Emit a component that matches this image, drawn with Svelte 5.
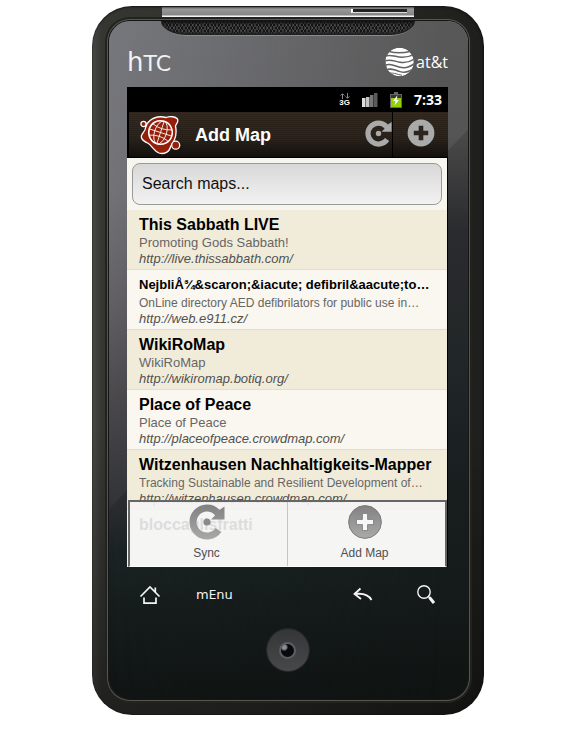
<script>
  const maps = [
    { name: 'This Sabbath LIVE', about: 'Promoting Gods Sabbath!', url: 'http://live.thissabbath.com/' },
    { name: 'NejbliÅ¾&scaron;&iacute; defibril&aacute;to…', about: 'OnLine directory AED defibrilators for public use in…', url: 'http://web.e911.cz/', smallName: true, smallAbout: true },
    { name: 'WikiRoMap', about: 'WikiRoMap', url: 'http://wikiromap.botiq.org/' },
    { name: 'Place of Peace', about: 'Place of Peace', url: 'http://placeofpeace.crowdmap.com/' },
    { name: 'Witzenhausen Nachhaltigkeits-Mapper', about: 'Tracking Sustainable and Resilient Development of…', url: 'http://witzenhausen.crowdmap.com/', smallAbout: true },
    { name: 'bloccaglisfratti', about: '', url: '' }
  ];
  let query = $state('');
</script>

{#snippet syncIcon(size, fill, hub)}
  <svg width={size} height={size} viewBox="0 0 36 36" aria-hidden="true">
    <path d="M28 8.200A14 14 0 1 0 29.500 26" fill="none" stroke={fill} stroke-width="7" />
    <path d="M35.500 2.500V15.500H22L26 11.500 25 9 31 5.500Z" fill={fill} />
    <circle cx="18" cy="18" r="3.600" fill={hub} />
  </svg>
{/snippet}

<main class="stage">
  <div class="phone">
    <div class="lip"><span class="slot"></span></div>
    <div class="grille"></div>

    <div class="glass">
      <header class="brands">
        <div class="htc"><span>h</span><small>TC</small></div>
        <div class="carrier">
          <svg width="29" height="30" viewBox="0 0 29 30" aria-hidden="true">
            <defs><clipPath id="ball"><circle cx="14.5" cy="15" r="14.3" /></clipPath></defs>
            <g clip-path="url(#ball)">
              <circle cx="14.500" cy="15" r="14.300" fill="#fff" />
              <g fill="none" stroke="#626264" stroke-width="1.500">
                <path d="M4 4.500Q14 7 25 4.500" />
                <path d="M-1 10C4 6.500 8 9.500 14 10S25 9.500 28 7.500" />
                <path d="M-1 14.500C4 11 9 14.300 15 15.300S26 14.500 30 11.500" />
                <path d="M-1 19C4 15.500 9 18.800 15 20.300S26 19.500 30 16" />
                <path d="M0 23.500C5 20 10 23.200 15 24.600S26 24 30 20.500" />
                <path d="M2 24.500 0 14M1 27C7 24.500 12 27.500 17 28.200" stroke-width="1" />
              </g>
            </g>
          </svg>
          <span>at&amp;t</span>
        </div>
      </header>

      <section class="screen">
        <div class="status">
          <div class="net">
            <svg width="10" height="6" viewBox="0 0 10 6" aria-hidden="true">
              <path d="M2.500 6V1M.6 2.600 2.500.7l1.900 1.900M7.500 0v5M5.600 3.400 7.500 5.300l1.900-1.900" fill="none" stroke="#8a8a8a" />
            </svg>
            <span>3G</span>
          </div>
          <svg width="16" height="14" viewBox="0 0 16 14" aria-hidden="true">
            <path d="M0 5h3.500v9H0z" fill="#ddd" /><path d="M4 4h3.500v10H4z" fill="#c4c4c4" />
            <path d="M8 2h3.500v12H8z" fill="#777" /><path d="M12 0h3.500v14H12z" fill="#5a5a5a" />
          </svg>
          <svg width="12" height="16" viewBox="0 0 12 16" aria-hidden="true">
            <path d="M4 0h4v2h4v14H0V2h4z" fill="#666" /><path d="M1 6h10v9H1z" fill="#8fd400" />
            <path d="M1 3h10v3H1z" fill="#333" />
            <path d="M7.500 3 3 9h2.500l-1 4.500L9 8H6.500z" fill="#fff" />
          </svg>
          <time>7:33</time>
        </div>

        <div class="bar">
          <svg width="42" height="40" viewBox="0 0 42 40" aria-hidden="true">
            <g fill="#961f0a" stroke="#fff" stroke-width="1.300">
              <path d="M11 5.500C16 1.500 22 1.200 27 2.500 31 1 36.500 1.500 38.500 4 40 7 37 8.500 36.500 11 37.500 16 37.500 20 35.500 24.500 34 28 32.500 29.500 31.500 32 30 37.500 25 39.500 20 38 15 36 13.500 31.500 9.500 28.500 5 26.500 1.500 24 2.500 20.500 4 17 6 16.500 6.500 13 7 9.500 8.500 7.500 11 5.500Z" />
              <circle cx="4.500" cy="9" r="2.600" />
              <circle cx="36.700" cy="30.200" r="4" />
            </g>
            <g fill="none" stroke="#fff" stroke-width=".8" transform="rotate(18 21.500 17.500)">
              <circle cx="21.500" cy="17.500" r="11.800" stroke-width="1.500" />
              <ellipse cx="21.500" cy="17.500" rx="6" ry="11.800" />
              <path d="M21.500 5.700v23.600M9.700 17.500h23.600M11.500 11.500q10 4 20 0M11.500 23.500q10-4 20 0" />
            </g>
          </svg>
          <h1>Add Map</h1>
          <button class="tool" aria-label="Sync">{@render syncIcon(27, '#aaa', '#aaa')}</button>
          <button class="tool add" aria-label="Add Map">
            <svg width="28" height="28" viewBox="0 0 28 28" aria-hidden="true">
              <circle cx="14" cy="14" r="13.400" fill="#aaa" />
              <path d="M11.700 6.800h4.600v4.900h4.900v4.600h-4.900v4.900h-4.600v-4.900H6.800v-4.600h4.900z" fill="#2c251d" />
            </svg>
          </button>
        </div>

        <div class="content">
          <div class="search">
            <input type="search" aria-label="Search maps" placeholder="Search maps..." bind:value={query} />
          </div>
          <ul>
            {#each maps as map}
              <li>
                <h2 class:small={map.smallName}>{map.name}</h2>
                <p class:small={map.smallAbout}>{map.about}</p>
                {#if map.url}<a href={map.url}>{map.url}</a>{/if}
              </li>
            {/each}
          </ul>
          <div class="menu">
            <button>{@render syncIcon(38, 'url(#metal)', '#8a8a8a')}<span>Sync</span></button>
            <button>
              <svg width="38" height="38" viewBox="0 0 38 38" aria-hidden="true">
                <defs>
                  <linearGradient id="metal" gradientUnits="userSpaceOnUse" x1="0" y1="0" x2="0" y2="38">
                    <stop offset="0" stop-color="#808080" /><stop offset="1" stop-color="#acacac" />
                  </linearGradient>
                </defs>
                <circle cx="19" cy="19" r="17.300" fill="url(#metal)" stroke="#787878" />
                <path d="M16.300 10h5.400v6.300H28v5.400h-6.300V28h-5.400v-6.300H10v-5.400h6.300z" fill="#f7f7f7" stroke="#777" stroke-width=".8" />
              </svg>
              <span>Add Map</span>
            </button>
          </div>
        </div>
      </section>

      <nav class="keys">
        <button aria-label="Home">
          <svg width="22" height="20" viewBox="0 0 22 20" fill="none" stroke="#f4f4f4" stroke-width="1.700" aria-hidden="true">
            <path d="M1.500 11.500 11 2l9.500 9.500M16.300 7V2.500M5 12.500v5.700h12v-5.700" />
          </svg>
        </button>
        <button class="word">m<small>E</small>nu</button>
        <span class="gap"></span>
        <button aria-label="Back">
          <svg width="20" height="16" viewBox="0 0 20 16" fill="none" stroke="#f4f4f4" stroke-width="1.800" aria-hidden="true">
            <path d="M7.500 1.500 1.500 7 8 12M2 7C10 6 15.500 7.500 18.500 13" />
          </svg>
        </button>
        <button aria-label="Search">
          <svg width="20" height="20" viewBox="0 0 20 20" fill="none" stroke="#f4f4f4" aria-hidden="true">
            <circle cx="8" cy="7" r="6.200" stroke-width="1.400" /><path d="m12 11 2 2" stroke-width="1.500" />
            <path d="m13.500 12.500 4.500 5.500" stroke-width="3" />
          </svg>
        </button>
      </nav>
      <button class="stick" aria-label="Trackpad"><span></span></button>
    </div>
  </div>
</main>

<style>
  :global(body) { background: #fff; }
  * { box-sizing: border-box; }
  button { border: 0; padding: 0; background: none; color: inherit; font: inherit; cursor: pointer; }
  svg { display: block; }
  .stage {
    display: flex;
    justify-content: center;
    padding: 6px 16px 19px;
    font-family: 'Liberation Sans', Arial, sans-serif;
  }
  .phone {
    position: relative;
    width: 100%;
    max-width: 392px;
    padding: 15px 16px 16px 17px;
    border-radius: 40px;
    background:
      linear-gradient(to bottom, transparent 60%, rgba(0, 0, 0, .4)),
      linear-gradient(to right, #484944, #353632 10px, #30312d 40%, #1e1e1c);
    box-shadow: inset 0 1px 2px #181817, inset -1px 0 2px #111;
  }
  .lip {
    position: absolute;
    top: 1px;
    left: 70px;
    right: 70px;
    height: 14px;
    background: linear-gradient(to bottom, #4d4d4b, #999 2px, #858585 8px, #f5f5f5 9px, #eee 12px, #333);
  }
  .slot {
    position: absolute;
    top: 2px;
    right: 7px;
    width: 56px;
    height: 4px;
    border-left: 2px solid #fff;
    border-bottom: 1px solid #ddd;
    background: #222;
  }
  .grille {
    position: absolute;
    z-index: 1;
    top: 15px;
    left: 69px;
    right: 69px;
    height: 15px;
    border-bottom: 1px solid #8a8a8a;
    border-radius: 0 0 26px 26px / 0 0 15px 15px;
    background:
      repeating-linear-gradient(60deg, transparent 0 2px, rgba(110, 110, 110, .4) 2px 3px),
      repeating-linear-gradient(120deg, #151515 0 2px, #3c3c3c 2px 3px);
    box-shadow: inset 0 2px 3px #111, inset 0 -2px 2px #222;
  }
  .glass {
    position: relative;
    padding: 0 20px 28px 18px;
    border-radius: 21px;
    background: linear-gradient(to bottom, #77787d, #737378 25%, #636165 41%, #4c4a4d 55%, #35363a 70%, #1d2526 78%, #161d1c 86%, #101514);
    box-shadow: 0 0 0 1px #151515, 0 0 0 2px #55564f, 0 0 0 4px #22231f;
  }
  .glass::before {
    content: '';
    position: absolute;
    inset: 0;
    border-radius: 21px;
    background: linear-gradient(to bottom, #585858, #555 17%, #4a4a4b 21%, #313235 31%, #232a2b 56%, #161d1c 80%, #0f1312);
    mask-image: linear-gradient(to right, transparent, #000 94%);
  }
  .glass::after {
    content: '';
    position: absolute;
    inset: 0;
    border-radius: 21px;
    background: linear-gradient(to bottom, rgba(0, 0, 0, .14) 70%, transparent 84%);
    clip-path: polygon(0 72%, 100% 16%, 100% 100%, 0 100%);
  }
  .glass > * { position: relative; z-index: 1; }
  .brands {
    display: flex;
    justify-content: space-between;
    align-items: flex-start;
    height: 66px;
    padding-top: 26px;
    color: #fff;
  }
  .htc { font: 26px/30px 'DejaVu Sans', sans-serif; color: #f2f2f2; }
  .htc small { font-size: 22px; }
  .carrier { display: flex; align-items: center; gap: 2px; font: 16px/28px 'Open Sans', sans-serif; }

  .screen { background: #000; overflow: hidden; }
  .status {
    display: flex;
    justify-content: flex-end;
    align-items: center;
    gap: 12px;
    height: 25px;
    padding-right: 6px;
    color: #fff;
  }
  .net { display: flex; flex-direction: column; align-items: center; font: bold 8px/8px 'Liberation Sans', sans-serif; }
  time { font: bold 14px/24px 'Open Sans', sans-serif; }
  .bar {
    display: flex;
    align-items: center;
    height: 46px;
    margin-left: 2px;
    padding-left: 10px;
    border-bottom: 1px solid #000;
    background:
      repeating-linear-gradient(to bottom, rgba(0, 0, 0, .12) 0 1px, transparent 1px 2px),
      linear-gradient(to bottom, #352a20, #2b231b 60%, #14100d);
    color: #fff;
  }
  h1 { flex: 1; margin: 0 0 0 14px; font-size: 18px; line-height: 24px; }
  .tool { display: flex; justify-content: flex-end; align-items: center; width: 28px; height: 45px; padding-bottom: 3px; }
  .add { justify-content: center; width: 56px; border-left: 1px solid #000; }

  .content {
    position: relative;
    height: 409px;
    margin-right: 1px;
    overflow: hidden;
    background: #f6f6ee;
  }
  .search { padding: 5px; }
  input {
    display: block;
    width: 100%;
    height: 42px;
    padding: 0 9px;
    border: 1px solid #999;
    border-radius: 8px;
    background: linear-gradient(to bottom, #d8d8d8, #f2f2f2);
    color: #000;
    font: 16px/20px 'Liberation Sans', Arial, sans-serif;
    appearance: none;
  }
  input::placeholder { color: #111; opacity: 1; }
  ul { margin: 0; padding: 0; list-style: none; }
  li {
    display: flex;
    flex-direction: column;
    height: 60px;
    padding: 5px 12px 0;
    border-bottom: 1px solid #dcdddd;
    background: #f9f7ef;
    white-space: nowrap;
  }
  li:nth-child(odd) { background: #f1ecda; }
  h2, p { margin: 0; }
  h2 { font-size: 16px; line-height: 20px; color: #000; }
  h2.small { font-size: 13px; }
  p { font-size: 13px; line-height: 16px; color: #666; }
  p.small { font-size: 12px; }
  li a { font-size: 13px; line-height: 16px; font-style: italic; color: #505050; text-decoration: none; }

  .menu {
    position: absolute;
    inset: auto 0 0 1px;
    display: flex;
    height: 67px;
    border: 2px solid #666;
    border-bottom: 1px solid #fff;
    background: rgba(244, 244, 244, .9);
  }
  .menu button {
    flex: 1;
    display: flex;
    flex-direction: column;
    align-items: center;
    justify-content: flex-start;
    padding: 2px 4px 0 0;
    color: #505050;
    font-size: 12px;
    line-height: 26px;
  }
  .menu button + button { border-left: 1px solid #c4c4c4; }

  .keys {
    display: flex;
    align-items: center;
    height: 56px;
    padding: 0 12px;
    color: #f4f4f4;
  }
  .word { margin-left: 35px; font: 13px/16px 'DejaVu Sans', sans-serif; }
  .word small { font-size: 12px; }
  .gap { flex: 1; }
  .keys button:last-child { margin-left: 43px; }
  .stick {
    display: flex;
    align-items: center;
    justify-content: center;
    width: 42px;
    height: 42px;
    margin: 6px auto 0;
    border-radius: 50%;
    background: linear-gradient(to bottom, #353637, #48484a);
    box-shadow: 0 0 0 1px #252828;
  }
  .stick span {
    width: 17px;
    height: 17px;
    border: 2px solid #5c5e63;
    border-radius: 50%;
    background: radial-gradient(circle at 25% 25%, #8a8d94 0 2px, #08090b 4px);
  }
</style>
